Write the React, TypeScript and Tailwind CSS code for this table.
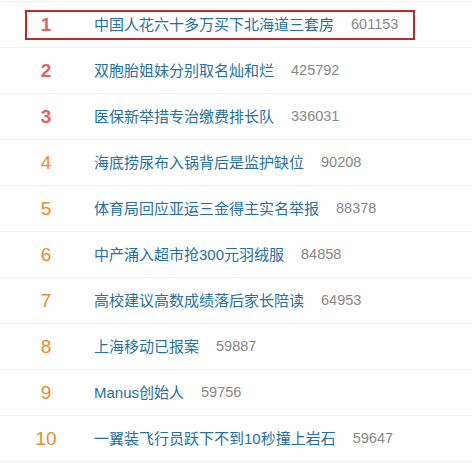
import React from "react";

const items: [string, string][] = [
  ["中国人花六十多万买下北海道三套房", "601153"],
  ["双胞胎姐妹分别取名灿和烂", "425792"],
  ["医保新举措专治缴费排长队", "336031"],
  ["海底捞尿布入锅背后是监护缺位", "90208"],
  ["体育局回应亚运三金得主实名举报", "88378"],
  ["中产涌入超市抢300元羽绒服", "84858"],
  ["高校建议高数成绩落后家长陪读", "64953"],
  ["上海移动已报案", "59887"],
  ["Manus创始人", "59756"],
  ["一翼装飞行员跃下不到10秒撞上岩石", "59647"],
];

export default function App() {
  return (
    <div
      className="w-[472px] h-[463px] bg-white overflow-hidden pt-[1px]"
      style={{ fontFamily: '"Liberation Sans", Arial, "Noto Sans CJK SC", sans-serif' }}
    >
      <div className="border-t border-[#f4f4f4]">
        {items.map(([title, count], i) => (
          <div key={i} className="h-[46px] border-b border-[#f0f0f0] flex items-center px-[25px]">
            <div
              className={
                "flex items-center h-[30px] w-[390px] " +
                (i === 0 ? "border-2 border-[#c4272b]" : "border-2 border-transparent")
              }
            >
              <div
                className={
                  "w-[38px] text-center text-[19px] leading-none " +
                  (i < 3 ? "font-bold text-[#e5645a]" : "text-[#f08a2e]")
                }
              >
                {i + 1}
              </div>
              <div className="ml-[29px] flex items-center">
                <span className="text-[15px] text-[#25709e] leading-none">{title}</span>
                <span className="ml-[17px] text-[14.5px] text-[#888888] leading-none">{count}</span>
              </div>
            </div>
          </div>
        ))}
      </div>
    </div>
  );
}
